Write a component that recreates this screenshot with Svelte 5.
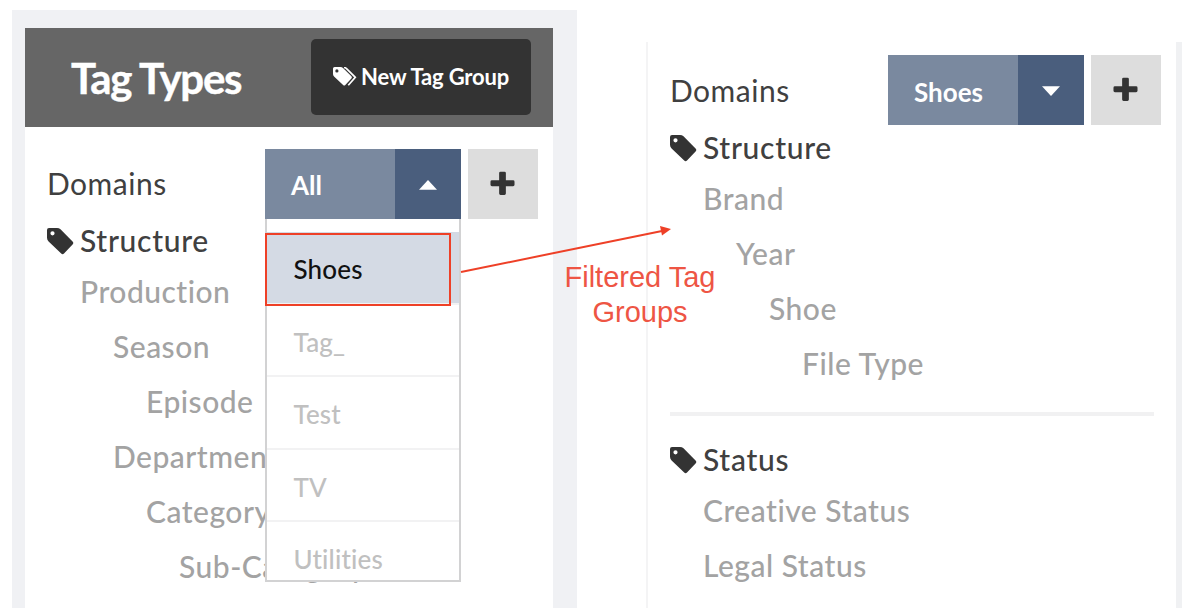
<script>
  const tree = [
    { name: 'Production', level: 0 },
    { name: 'Season', level: 1 },
    { name: 'Episode', level: 2 },
    { name: 'Department', level: 1 },
    { name: 'Category', level: 2 },
    { name: 'Sub-Category', level: 3 }
  ];
  const filtered = [
    { name: 'Brand', level: 0 },
    { name: 'Year', level: 1 },
    { name: 'Shoe', level: 2 },
    { name: 'File Type', level: 3 }
  ];
  const statuses = [
    { name: 'Creative Status', level: 0 },
    { name: 'Legal Status', level: 0 }
  ];
  const options = ['Shoes', 'Tag_', 'Test', 'TV', 'Utilities'];
</script>

{#snippet tagIcon()}
  <svg class="tag" width="27" height="27" viewBox="0 0 27 27">
    <path fill="#333" fill-rule="evenodd" d="M2 0H10Q12 0 13.500 1.300L25.800 13.700Q27 15 25.800 16.300L17 25.500Q15.600 26.800 14.200 25.500L1.600 13.400Q0 11.800 0 9.800V2Q0 0 2 0ZM5.500 3.200A2.100 2.100 0 1 0 5.500 7.400A2.100 2.100 0 1 0 5.500 3.200Z" />
  </svg>
{/snippet}

{#snippet domainRow(value, open)}
  <div class="domain">
    <span class="label">Domains</span>
    <div class="select">
      <span class="value">{value}</span>
      <span class="toggle">
        <svg width="20" height="12" viewBox="0 0 20 12">
          <path fill="#fff" d={open ? 'M1 10.7 10 1l9 9.7z' : 'M1 1.3h18L10 11z'} />
        </svg>
      </span>
      {#if open}
        <ul class="menu">
          {#each options as option, i}
            <li class:active={i === 0}>{option}</li>
          {/each}
        </ul>
      {/if}
    </div>
    <span class="add">
      <svg width="25" height="25" viewBox="0 0 26 26">
        <path fill="#333" d="M11 .7h4q1.500 0 1.500 1.500v7.500H24q1.500 0 1.500 1.500v3.200q0 1.500-1.500 1.500h-7.500v7.600q0 1.500-1.500 1.500h-4q-1.500 0-1.500-1.500v-7.600H2q-1.500 0-1.500-1.500v-3.200q0-1.500 1.500-1.500h7.500V2.200Q9.500.7 11 .7z" />
      </svg>
    </span>
  </div>
{/snippet}

{#snippet group(title, items)}
  <section>
    <h2>{@render tagIcon()}{title}</h2>
    {#each items as item}
      <div class="item" style="padding-left: {33 + item.level * 33}px">{item.name}</div>
    {/each}
  </section>
{/snippet}

<main>
  <div class="panel left">
    <header>
      <h1>Tag Types</h1>
      <button>
        <svg width="25" height="20" viewBox="0 0 25 20">
          <path fill="#fff" fill-rule="evenodd" d="M1.600 0H7.500Q9 0 10 1L18.400 9.300Q19.500 10.400 18.400 11.500L12.300 18Q11.200 19 10.100 18L1.300 9.700Q0 8.500 0 7V1.600Q0 0 1.600 0ZM3.900 2.300A1.600 1.600 0 1 0 3.900 5.500A1.600 1.600 0 1 0 3.900 2.300Z" />
          <path fill="none" stroke="#fff" stroke-width="1.700" d="M11 .5Q12.500.6 13.500 1.600L22.300 10.400 15.300 18.200" />
        </svg>
        <span>New Tag Group</span>
      </button>
    </header>
    <div class="body">
      {@render domainRow('All', true)}
      {@render group('Structure', tree)}
    </div>
  </div>

  <div class="panel right">
    {@render domainRow('Shoes', false)}
    {@render group('Structure', filtered)}
    <hr />
    {@render group('Status', statuses)}
  </div>

  <svg class="arrow" width="1198" height="608" viewBox="0 0 1198 608">
    <rect x="266" y="234" width="184" height="71" fill="none" stroke="#ee4027" stroke-width="2" />
    <path d="M461 272 662 231" stroke="#ee4027" stroke-width="2" />
    <path d="M671 229 660 226 662 235.500z" fill="#ee4027" />
  </svg>
  <p class="note">Filtered Tag<br />Groups</p>
</main>

<style>
  :global(body) { margin: 0; background: #fff; }
  main {
    position: relative;
    box-sizing: border-box;
    width: 1198px;
    height: 608px;
    overflow: hidden;
    display: flex;
    align-items: flex-start;
    gap: 69px;
    padding: 10px 0 0 12px;
    font-family: Lato, sans-serif;
    font-variant-ligatures: none;
    color: #404040;
  }
  .panel { box-sizing: border-box; flex: none; }
  .left {
    width: 565px;
    height: 598px;
    border: solid #f0f1f4;
    border-width: 18px 24px 0 13px;
  }
  header {
    display: flex;
    align-items: center;
    justify-content: space-between;
    box-sizing: border-box;
    height: 98.500px;
    padding: 0 22px 0 46px;
    background: #666;
  }
  h1 { margin: 1px 0 0; font-size: 42px; line-height: 50px; font-weight: 700; color: #fff; letter-spacing: -1.25px; -webkit-text-stroke: 0.4px #fff; }
  button {
    display: flex;
    align-items: center;
    gap: 3px;
    box-sizing: border-box;
    width: 220px;
    height: 76px;
    padding: 0 0 0 22px;
    border: 0;
    border-radius: 5px;
    background: #333;
    color: #fff;
    font: 700 22px/30px Lato, sans-serif;
    letter-spacing: -0.16px;
    white-space: nowrap;
  }
  .body { padding: 22.500px 15px 0 22px; }
  .left .domain { margin-bottom: -1px; }
  .right {
    width: 536px;
    height: 567px;
    margin-top: 32px;
    padding: 13px 15px 0 22px;
    border-left: 2px solid #f4f4f5;
    border-right: 6px solid #f0f1f3;
  }
  .domain { display: flex; height: 70px; }
  .label { flex: 1; font-size: 30px; line-height: 71px; letter-spacing: 0.5px; }
  .left .label { line-height: 69px; }
  .select { position: relative; display: flex; width: 196px; color: #fff; font-size: 26px; font-weight: 700; line-height: 73px; }
  .right .select { line-height: 75px; }
  .value { width: 104px; padding-left: 26px; background: #7a899f; }
  .toggle { display: flex; flex: 1; align-items: center; justify-content: center; padding: 2px 0 0; background: #4a5e7d; }
  .add { display: flex; align-items: center; justify-content: center; width: 70px; margin-left: 7px; background: #ddd; }
  .add svg { margin: 0 1px 2px 0; }
  .menu {
    position: absolute;
    z-index: 1;
    top: 70px;
    left: 0;
    box-sizing: border-box;
    width: 196px;
    height: 363px;
    margin: 0;
    padding: 13px 0 0;
    overflow: hidden;
    list-style: none;
    background: #fff;
    border: 2px solid #d2d2d3;
    border-top: 0;
  }
  .menu li {
    box-sizing: border-box;
    height: 72.500px;
    padding-left: 26.500px;
    border-bottom: 2px solid #f2f2f3;
    font-weight: 500;
    line-height: 74px;
    letter-spacing: 0.15px;
    color: #c0c0c0;
  }
  .menu .active { background: #d4dae4; color: #111; }
  h2 { display: flex; gap: 6px; margin: 0; padding-bottom: 2px; font-size: 30px; font-weight: 500; line-height: 44px; letter-spacing: 0.7px; }
  .tag { flex: none; margin-top: 10px; }
  .item { line-height: 55px; font-size: 30px; font-weight: 500; letter-spacing: 0.5px; color: #a3a3a3; white-space: nowrap; }
  hr { height: 4px; margin: 21px 7px 21px 0; border: 0; background: #f1f1f2; }
  .arrow { position: absolute; inset: 0; z-index: 2; }
  .note {
    position: absolute;
    z-index: 2;
    left: 540px;
    top: 260px;
    width: 200px;
    margin: 0;
    text-align: center;
    color: #ee5544;
    font: 29px/35px "Liberation Sans", sans-serif;
  }
</style>
